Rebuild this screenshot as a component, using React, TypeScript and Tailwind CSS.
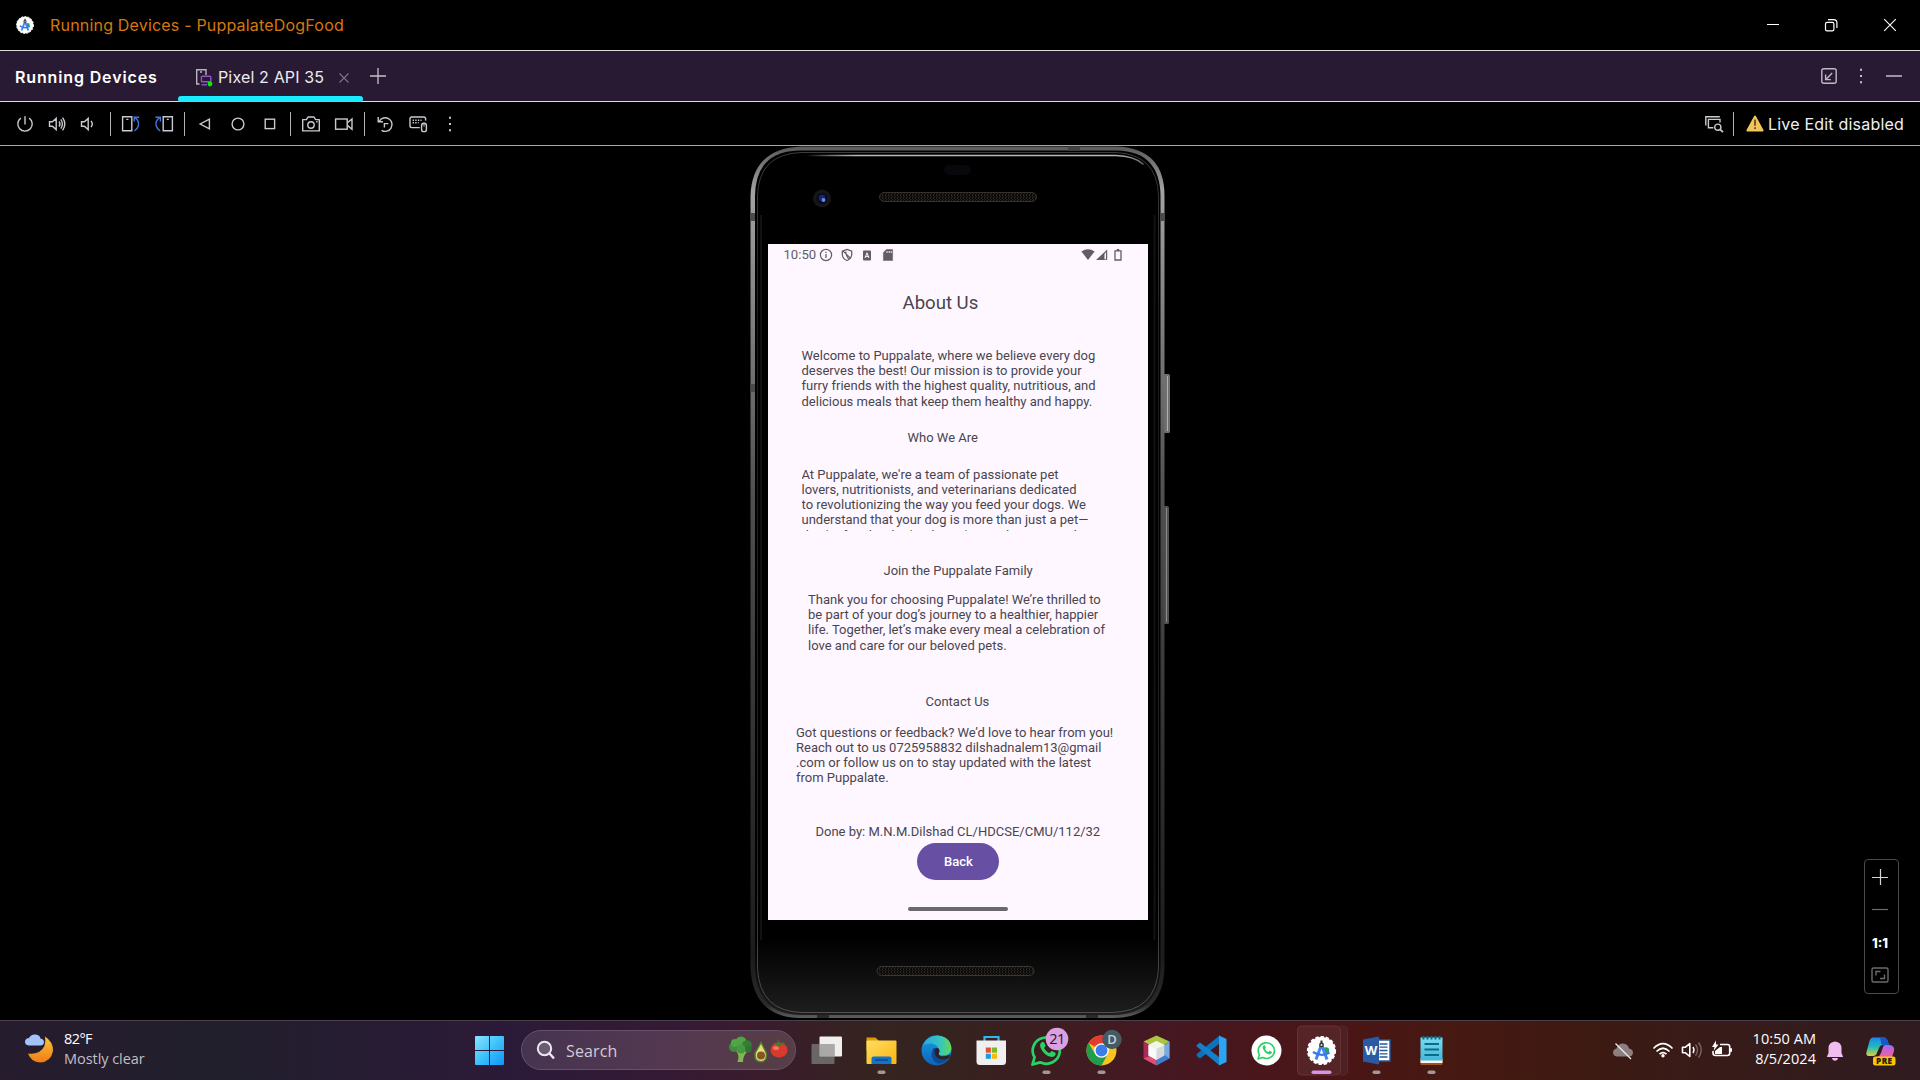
import React from "react";

type IconProps = { w?: number; h?: number; children: React.ReactNode; className?: string };

const Ico = ({ w = 24, h = 24, children, className = "" }: IconProps) => (
  <svg
    width={w}
    height={h}
    viewBox={`${-w / 2} ${-h / 2} ${w} ${h}`}
    fill="none"
    stroke="#c9cacf"
    strokeWidth="1.4"
    className={`shrink-0 ${className}`}
  >
    {children}
  </svg>
);

const Sep = ({ className = "" }: { className?: string }) => (
  <div className={`h-6 w-px shrink-0 bg-[#b4b4b4] ${className}`} />
);

const AndroidStudio = ({ r }: { r: number }) => (
  <g transform={`scale(${r / 15})`} stroke="none">
    <circle r="13.6" fill="#fff" />
    <circle r="13.8" fill="none" stroke="#fff" strokeWidth="1.6" strokeDasharray="3.4 1.9" />
    <circle cx="4.5" cy="0" r="3.2" fill="#1fa463" />
    <path d="M0-6 L-5.5 9 M0-6 L5.5 9" stroke="#4285f4" strokeWidth="3" fill="none" />
    <path d="M-8.5 1.5 Q0 7 8 2" stroke="#3b78e7" strokeWidth="2.4" fill="none" />
    <path d="M-1-10h2v3h-2z" fill="#333" />
    <circle cy="-5.6" r="2.4" fill="#333" />
    <circle cy="-5.6" r="1" fill="#dfe7f5" />
  </g>
);

function TitleBar() {
  return (
    <div className="flex h-[50px] shrink-0 items-center bg-black">
      <Ico w={18} h={18} className="ml-4">
        <AndroidStudio r={9.2} />
      </Ico>
      <span className="ml-4 whitespace-nowrap text-[16px] leading-5 tracking-[0.19px] text-[#d4780f]">
        Running Devices - PuppalateDogFood
      </span>
      <div className="ml-auto flex items-center">
        <Ico w={16} h={16} className="mr-[42px]">
          <path d="M-6-.5H6" stroke="#fff" strokeWidth="1" />
        </Ico>
        <Ico w={16} h={16} className="mr-[43px]">
          <rect x="-5.5" y="-2.6" width="8.4" height="8.4" rx="1.6" stroke="#fff" strokeWidth="1.2" />
          <path d="M-3-5.4H2.8Q5.9-5.4 5.9-2.2V3" stroke="#fff" strokeWidth="1.2" />
        </Ico>
        <Ico w={16} h={16} className="mr-[22px]">
          <path d="M-5.8-5.8L5.8 5.8M5.8-5.8L-5.8 5.8" stroke="#fff" strokeWidth="1.1" />
        </Ico>
      </div>
    </div>
  );
}

function TabBar() {
  return (
    <div className="flex h-[52px] shrink-0 items-stretch border-y border-[#dcdcdc] bg-[#291a33]">
      <div className="ml-[15px] flex w-[163px] items-center text-[16px] font-semibold tracking-[0.86px] text-white">
        <span className="whitespace-nowrap pt-0.5">Running Devices</span>
      </div>
      <div className="relative flex w-[185px] items-center">
        <Ico w={18} h={20} className="ml-[17px] mt-0.5">
          <path d="M-4.5 7H-7.3V-7.2H2V-2" stroke="#b9b4c0" />
          <path d="M-4-5H-2" stroke="#b9b4c0" />
          <rect x="-2.6" y="-.8" width="9.4" height="5.6" rx="1" stroke="#8f55c9" />
          <path d="M-2.5 7.8H3" stroke="#8f55c9" />
          <circle cx="6" cy="7" r="2.4" fill="#00f000" stroke="none" />
        </Ico>
        <span className="ml-[5px] whitespace-nowrap pt-0.5 text-[16px] tracking-[0.15px] text-[#ececf0]">Pixel 2 API 35</span>
        <Ico w={12} h={12} className="absolute left-[160px] top-[21px]">
          <path d="M-4.5-4.5L4.5 4.5M4.5-4.5L-4.5 4.5" stroke="#7d7585" strokeWidth="1.1" />
        </Ico>
        <div className="absolute -bottom-px left-0 h-1.5 w-full rounded-[3px] bg-[#1aebff]" />
      </div>
      <Ico w={18} h={18} className="ml-[6px] mt-[15.5px]">
        <path d="M-8 0H8M0-8V8" stroke="#c6c2cb" strokeWidth="1.3" />
      </Ico>
      <div className="ml-auto flex items-center">
        <Ico w={18} h={18} className="mr-[17px]">
          <rect x="-7.2" y="-7.2" width="14.4" height="14.4" rx="2" stroke="#bdb8c3" />
          <path d="M3.200-3L-2.600 2.900M-3.400-1.600V3.600H1.800" stroke="#bdb8c3" />
        </Ico>
        <Ico w={12} h={18} className="mr-[18px]">
          <path d="M-1-7.2h2v2h-2zM-1-1h2v2h-2zM-1 5.2h2v2h-2z" fill="#c6c2cb" stroke="none" />
        </Ico>
        <Ico w={18} h={18} className="mr-[17px]">
          <path d="M-8 0H8" stroke="#9b95a3" strokeWidth="2" />
        </Ico>
      </div>
    </div>
  );
}

function ToolBar() {
  return (
    <div className="flex h-11 shrink-0 items-center border-b border-[#a9a9a9] bg-black">
      <Ico className="ml-[13px]">
        <path d="M-4.2-5.9A7.2 7.2 0 1 0 4.2-5.9M0-7.8V.4" />
      </Ico>
      <Ico className="ml-2">
        <path d="M-7.5-2.3H-4.6L-.8-5.6V5.6L-4.6 2.3H-7.5ZM2-2.5Q4 0 2 2.5M3.8-4.6Q7 0 3.8 4.6M5.6-6.3Q10 0 5.6 6.3" />
      </Ico>
      <Ico className="ml-[7px]">
        <path d="M-6.5-2.3H-3.6L.2-5.6V5.6L-3.6 2.3H-6.5ZM3-3Q5.6 0 3 3" />
      </Ico>
      <Sep className="ml-[10px]" />
      <Ico className="ml-2">
        <path d="M-8.400-7.200H.800V6.800H-8.400ZM-4.600-4.600H-2.600" />
        <path d="M4-6.400Q8.500-3 7.400 1.500Q6.600 5 3.400 6.900M3.200-2.400V-6.800H8.200" stroke="#3f76e0" />
      </Ico>
      <Ico className="ml-[9px]">
        <path d="M-.800-7.200H8.400V6.800H-.800ZM2.800-4.600H4.800" />
        <path d="M-4.400-6.400Q-9-3-7.900 1.500Q-7 5-3.800 6.900M-3.600-2.400V-6.800H-8.600" stroke="#3f76e0" />
      </Ico>
      <Sep className="ml-2" />
      <Ico className="ml-2">
        <path d="M4.400-4.800V4.800L-4.800 0Z" />
      </Ico>
      <Ico className="ml-[9px]">
        <circle r="5.900" />
      </Ico>
      <Ico className="ml-2">
        <rect x="-4.800" y="-4.800" width="9.400" height="9.400" />
      </Ico>
      <Sep className="ml-2" />
      <Ico className="ml-2">
        <path d="M-8.300-4.400H-4.600L-3-7H3L4.600-4.400H8.300V6.900H-8.300Z" strokeLinejoin="round" />
        <circle cy="1" r="3.200" />
        <path d="M5.200-2.200h1.400" />
      </Ico>
      <Ico className="ml-[9px]">
        <rect x="-8.400" y="-5" width="11.600" height="10.200" />
        <path d="M3.400-1.200L8-5V5.200L3.400 1.400" />
      </Ico>
      <Sep className="ml-2" />
      <Ico className="ml-2">
        <path d="M-5.800-2.600A6.800 6.800 0 1 1-3.400 6.300M-6.800-7V-2.200H-2M-.600 3.600V-.400H3.400" />
      </Ico>
      <Ico className="ml-[9px]">
        <path d="M1.800 3.600H-6.200Q-8 3.600-8 1.800V-5.200Q-8-7-6.200-7H5.600Q7.600-7 7.600-5.200V-3.600" />
        <path d="M-5.400-3.800h9M-5.400-1.200h6" strokeDasharray="1.400 1.200" />
        <rect x="3.600" y="-.800" width="4.800" height="8.400" rx="2.200" />
        <path d="M6-.5V2.600" strokeWidth="1" />
      </Ico>
      <Ico className="ml-2">
        <path d="M-1-7.200h2v2h-2zM-1-1h2v2h-2zM-1 5.200h2v2h-2z" fill="#c9cacf" stroke="none" />
      </Ico>
      <div className="ml-auto flex items-center">
        <Ico className="mr-[7px]">
          <path d="M-8.200 1.600V-7.200H5.800" />
          <path d="M-.6 3.800H-5.600V-4.600H6V-1.600" />
          <circle cx="3.800" cy="3.200" r="3.100" />
          <path d="M6.100 5.400L9 8.200" strokeWidth="1.800" />
        </Ico>
        <Sep className="mr-3" />
        <Ico w={18} h={18} className="mr-1">
          <path d="M0-7.400L7.600 6.400H-7.600Z" fill="#f2c55c" stroke="#f2c55c" strokeWidth="2" strokeLinejoin="round" />
          <path d="M-.9-4.600H.9V1.800H-.9ZM-.9 3.200H.9V5H-.9Z" fill="#5e4d33" stroke="none" />
        </Ico>
        <span className="mr-4 whitespace-nowrap text-[16px] tracking-[0.200px] text-[#eef0f4]">Live Edit disabled</span>
      </div>
    </div>
  );
}

/* Phone body, speakers, camera and side keys, in window coordinates. */
function DeviceFrame() {
  return (
    <svg className="absolute inset-0" width="430" height="874" viewBox="746 146 430 874" fill="none">
      <defs>
        <linearGradient id="edge" x1="0" y1="0" x2="0" y2="1">
          <stop offset="0" stopColor="#5a5a5a" />
          <stop offset=".05" stopColor="#a2a2a2" />
          <stop offset=".15" stopColor="#8a8a8a" />
          <stop offset=".4" stopColor="#505050" />
          <stop offset=".7" stopColor="#303030" />
          <stop offset=".93" stopColor="#1c1c1c" />
          <stop offset=".985" stopColor="#2a2a2a" />
          <stop offset="1" stopColor="#5e5e5e" />
        </linearGradient>
        <linearGradient id="edgeR" x1="0" y1="0" x2="0" y2="1">
          <stop offset="0" stopColor="#a5a5a5" />
          <stop offset=".25" stopColor="#858585" />
          <stop offset=".5" stopColor="#626262" />
          <stop offset=".8" stopColor="#2e2e2e" />
          <stop offset="1" stopColor="#1e1e1e" />
        </linearGradient>
        <linearGradient id="body" x1="0" y1="0" x2="0" y2="1">
          <stop offset="0" stopColor="#000" />
          <stop offset=".91" stopColor="#000" />
          <stop offset="1" stopColor="#1e1e1e" />
        </linearGradient>
        <linearGradient id="rim" x1="0" y1="0" x2="0" y2="1">
          <stop offset="0" stopColor="#3c3c3c" />
          <stop offset=".2" stopColor="#1c1c1c" />
          <stop offset=".8" stopColor="#222" />
          <stop offset="1" stopColor="#505050" />
        </linearGradient>
        <linearGradient id="gloss" x1="0" y1="0" x2="1" y2="0">
          <stop offset="0" stopColor="#fff" stopOpacity="0" />
          <stop offset=".15" stopColor="#b5bcc0" />
          <stop offset=".9" stopColor="#b5bcc0" />
          <stop offset="1" stopColor="#fff" stopOpacity=".4" />
        </linearGradient>
        <pattern id="mesh" width="3" height="3" patternUnits="userSpaceOnUse">
          <rect width="3" height="3" fill="#0c0b0a" />
          <path d="M0 0L1.5 1.5L0 3" stroke="#38342e" strokeWidth=".7" />
        </pattern>
      </defs>
      <rect x="1163" y="374" width="7" height="59" rx="1.5" fill="#6f6f6f" />
      <rect x="1167" y="376" width="1" height="55" fill="#b0b0b0" />
      <rect x="1163" y="506" width="6" height="118" rx="1.5" fill="#505050" />
      <rect x="1166" y="508" width="1" height="114" fill="#8a8a8a" />
      <path
        d="M802 146.500H1116Q1164.500 148 1164.500 196V968Q1163 1017 1114 1018H800Q753 1017 750.500 968V196Q752 148 802 146.500Z"
        fill="url(#edge)"
      />
      <path d="M1162.500 190V940" stroke="url(#edgeR)" strokeWidth="3.500" />
      <path
        d="M799 150.500H1117Q1160 151.500 1160.500 196V968Q1158.500 1014 1114 1015H800Q757 1014 755 968V196Q755.500 151.500 799 150.500Z"
        fill="url(#body)"
      />
      <path
        d="M801 152.500H1115Q1157.500 154 1158.500 196V968Q1156.500 1011.500 1112 1012.500H802Q759.500 1011.500 757.500 968V196Q758.500 154 801 152.500Z"
        stroke="url(#rim)"
        strokeWidth="1"
      />
      <path d="M761 215V940M1154.500 215V940" stroke="#121212" strokeWidth="2" />
      <path d="M750.500 213H755V221H750.500ZM1160.500 213H1164.500V221H1160.500ZM750.500 384H755V392H750.500Z" fill="#4a4a4a" />
      <path d="M1068 146.500H1080V150.500H1068Z" fill="#444" />
      <path d="M817 1015H829V1018H817ZM1086 1015H1098V1018H1086Z" fill="#2a2a2a" />
      <path d="M806 155.500H1116Q1134 156 1143 164" stroke="url(#gloss)" strokeWidth="1.600" strokeLinecap="round" />
      <rect x="944" y="165" width="27" height="10" rx="5" fill="#07070c" />
      <circle cx="822" cy="198.500" r="9" fill="#15151a" />
      <circle cx="822" cy="198.500" r="5.500" fill="#080a1e" />
      <circle cx="822" cy="198" r="3.200" fill="#1b2765" />
      <circle cx="823.500" cy="200" r="1.900" fill="#6f86f0" />
      <rect x="879.500" y="192.500" width="157" height="9" rx="4.500" fill="url(#mesh)" stroke="#35322e" />
      <rect x="877" y="966.500" width="157" height="9" rx="4.500" fill="url(#mesh)" stroke="#3a3835" />
    </svg>
  );
}

function StatusBar() {
  return (
    <div className="flex h-[22px] shrink-0 items-center text-[13.100px] text-[#615d66]">
      <span className="ml-[15.500px] w-[34.500px] whitespace-nowrap">10:50</span>
      <Ico w={14} h={14} className="ml-px">
        <circle r="5.600" stroke="#615d66" strokeWidth="1.200" />
        <path d="M0-1V3M0-3.200V-2" stroke="#615d66" strokeWidth="1.300" />
      </Ico>
      <Ico w={14} h={14} className="ml-[6.500px]">
        <path d="M0-5.600L4.700-3.800V0Q4 4 0 5.500Q-4 4-4.700 0V-3.800Z" stroke="#615d66" strokeWidth="1.300" />
        <path d="M-4-4L3.800 3.500M-1-3.500Q-1.500 0 2 4.500" stroke="#615d66" strokeWidth="1.100" />
      </Ico>
      <Ico w={14} h={14} className="ml-[6.500px]">
        <rect x="-4" y="-4.600" width="8" height="10" rx=".8" fill="#615d66" stroke="none" />
        <path d="M-2 3L0-2.200L2 3M-1.200 1.400H1.200" stroke="#fef7ff" strokeWidth="1" />
      </Ico>
      <Ico w={14} h={14} className="ml-[6.500px]">
        <path d="M-1.600-5.500H4.600V5.500H-4.600V-2.500Z" fill="#615d66" stroke="#615d66" strokeWidth=".5" strokeLinejoin="round" />
        <path d="M-1-4V-2M1.200-4V-2M3.200-4V-2" stroke="#fef7ff" strokeWidth=".9" />
      </Ico>
      <Ico w={14} h={14} className="ml-auto">
        <path d="M-6.600-3.600Q0-7.800 6.600-3.600L0 5Z" fill="#615d66" stroke="none" />
      </Ico>
      <Ico w={12} h={14} className="ml-px">
        <path d="M5.200-5.500V5H-6Z" fill="#615d66" stroke="none" />
        <path d="M4-3V4.200H2.500V-1Z" fill="#fef7ff" stroke="none" />
      </Ico>
      <Ico w={12} h={14} className="ml-1 mr-6">
        <path d="M-3-4.200H3V5H-3ZM-1.200-5.400H1.200" stroke="#615d66" strokeWidth="1.300" />
      </Ico>
    </div>
  );
}

function AppScreen() {
  return (
    <div
      className="relative ml-[22px] mt-[98px] flex h-[676px] w-[380px] flex-col overflow-hidden bg-[#fef7ff] text-[13px] leading-[15.200px] text-[#49454f]"
      style={{ fontFamily: "Roboto, sans-serif" }}
    >
      <StatusBar />
      <h1 className="ml-[134.500px] mt-[24px] h-[26px] whitespace-nowrap text-[18.600px] leading-[27px]">About Us</h1>
      <p className="ml-[33.500px] mt-[32px] h-[62px] whitespace-nowrap">
        Welcome to Puppalate, where we believe every dog
        <br />
        deserves the best! Our mission is to provide your
        <br />
        furry friends with the highest quality, nutritious, and
        <br />
        delicious meals that keep them healthy and happy.
      </p>
      <h2 className="ml-[139.500px] mt-5 h-4 whitespace-nowrap">Who We Are</h2>
      <p className="ml-[33.500px] mt-[20.700px] h-[64.300px] overflow-hidden whitespace-nowrap">
        At Puppalate, we're a team of passionate pet
        <br />
        lovers, nutritionists, and veterinarians dedicated
        <br />
        to revolutionizing the way you feed your dogs. We
        <br />
        understand that your dog is more than just a pet—
        <br />
        they're family. That's why we've made it our goal to
      </p>
      <h2 className="ml-[115.500px] mt-8 h-4 whitespace-nowrap">Join the Puppalate Family</h2>
      <p className="ml-10 mt-[13px] h-[62px] whitespace-nowrap">
        Thank you for choosing Puppalate! We’re thrilled to
        <br />
        be part of your dog’s journey to a healthier, happier
        <br />
        life. Together, let’s make every meal a celebration of
        <br />
        love and care for our beloved pets.
      </p>
      <h2 className="ml-[157.500px] mt-10 h-4 whitespace-nowrap">Contact Us</h2>
      <p className="ml-7 mt-[14.600px] h-[62.400px] whitespace-nowrap">
        Got questions or feedback? We’d love to hear from you!
        <br />
        Reach out to us 0725958832 dilshadnalem13@gmail
        <br />
        .com or follow us on to stay updated with the latest
        <br />
        from Puppalate.
      </p>
      <p className="ml-[47.500px] mt-[37px] h-4 whitespace-nowrap">Done by: M.N.M.Dilshad CL/HDCSE/CMU/112/32</p>
      <button className="mx-auto mt-[3px] flex h-[37px] w-[82px] shrink-0 items-center justify-center rounded-full bg-[#6750a4] pl-px pt-px font-medium text-white">
        Back
      </button>
      <div className="mx-auto mb-[9px] mt-auto h-1 w-[100px] rounded-full bg-[#6b6770]" />
    </div>
  );
}

function ZoomPanel() {
  return (
    <div className="absolute right-[21px] top-[713px] flex h-[135px] w-[35px] flex-col items-center rounded-[4px] border border-[#4a4a4a] pr-[3px]">
      <Ico w={18} h={18} className="mt-2">
        <path d="M-8 .5H8M.5-8V8" stroke="#d5d6da" strokeWidth="1.200" />
      </Ico>
      <Ico w={18} h={18} className="mt-[14px]">
        <path d="M-8 .5H8" stroke="#6b6b6b" strokeWidth="1.200" />
      </Ico>
      <span className="mt-[15px] text-[13px] font-extrabold leading-5 text-white">1:1</span>
      <Ico w={18} h={18} className="mt-[13px]">
        <rect x="-8" y="-7" width="16" height="14" rx="1.500" stroke="#6b6b6b" />
        <path d="M-4 .5V-3.500H.5M4.500-.5V3.500H0" stroke="#6b6b6b" />
      </Ico>
    </div>
  );
}

const WaGlyph = ({ s, c }: { s: number; c: string }) => (
  <g transform={`scale(${s})`}>
    <path d="M-14.500 14.500L-12.300 7A14 13.500 0 1 1-6.500 12.200Z" fill="none" stroke={c} strokeWidth="2.800" strokeLinejoin="round" />
    <path
      d="M-5.500-7Q-3.500-8.500-2.500-6L-1.500-3.500Q-1.500-2.500-3-1.200Q-1 3 3 4.200Q4.500 1.800 5.500 2.200L9 4Q9 8 4.500 8.200Q-3 7-6.500-1Q-8-5-5.500-7Z"
      fill={c}
      transform="translate(.5,-1.500)"
    />
  </g>
);

const apps: { name: string; run?: boolean; active?: boolean; art: React.ReactNode }[] = [
  {
    name: "task-view",
    art: (
      <>
        <rect x="-7" y="-14" width="22.500" height="20" rx="1" fill="#f1efee" />
        <rect x="-15" y="-6.500" width="23" height="20" rx="1" fill="#777" opacity=".8" />
        <rect x="-7" y="-6.500" width="15" height="12.500" fill="#aaa9a8" />
      </>
    ),
  },
  {
    name: "explorer",
    run: true,
    art: (
      <>
        <path d="M-15-13H-6L-3-10V0H-15Z" fill="#e09a05" />
        <rect x="-15" y="-10" width="30" height="23.500" rx="1" fill="url(#folder)" />
        <path d="M-10 13.500V8Q-10 6-8 6H8Q10 6 10 8V13.500Z" fill="#1272cc" />
        <path d="M-6.500 9.500H6.500" stroke="#0a3e80" strokeWidth="1.200" />
      </>
    ),
  },
  {
    name: "edge",
    art: (
      <>
        <circle r="15" fill="url(#edgeBlue)" />
        <path d="M-14 -5Q-9-15 1-15Q14-14 15-2Q14 6 4 5Q1 4 3 1Q2-6-5-7Q-11-7-14-5Z" fill="url(#edgeGreen)" />
        <path d="M-3-2.500Q-8 6-1 12Q6 15 12 8Q9 9.500 4 7.500Q-3 5-1.500-2Z" fill="#0d4a94" />
        <path d="M-1.500-2Q3-4 3 1Q1 4 4 5.500Q9 6.500 14 4Q13 7 12 8Q2 11-1.500 4Q-2.500 0-1.500-2Z" fill="#2b2124" />
      </>
    ),
  },
  {
    name: "store",
    art: (
      <>
        <path d="M-7-9V-13.500H7V-9" fill="none" stroke="#35b5f0" strokeWidth="2.200" />
        <path d="M-15-10H14.500V11Q14.500 14.500 11 14.500H-11.500Q-15 14.500-15 11Z" fill="#f1f0f0" />
        <path d="M-5.700-3H-.6V2.200H-5.700Z" fill="#e8502a" />
        <path d="M.4-3H5.500V2.200H.4Z" fill="#7db827" />
        <path d="M-5.700 3.200H-.6V8.300H-5.700Z" fill="#14a0e8" />
        <path d="M.4 3.200H5.500V8.300H.4Z" fill="#f9b80b" />
      </>
    ),
  },
  {
    name: "whatsapp",
    run: true,
    art: (
      <>
        <WaGlyph s={0.97} c="#25d366" />
        <circle cx="10.500" cy="-11.500" r="11.300" fill="#d9a1e4" />
        <text x="10.500" y="-6.200" textAnchor="middle" fontSize="14.500" letterSpacing="-.6" fill="#25122c" fontFamily="Open Sans, sans-serif">
          21
        </text>
      </>
    ),
  },
  {
    name: "chrome",
    run: true,
    art: (
      <>
        <circle r="15" fill="#fcc31e" />
        <path d="M0 0L-13-7.500A15 15 0 0 1 13-7.500L0-7Z" fill="#e33b2e" />
        <path d="M-13-7.500A15 15 0 0 0 0 15L6 4L-6 4Z" fill="#1f9d4d" />
        <circle r="7.300" fill="#fff" />
        <circle r="5.900" fill="#3b7ded" />
        <circle cx="10.500" cy="-11" r="9.700" fill="#465a64" />
        <text x="10.500" y="-6.200" textAnchor="middle" fontSize="13" fontWeight="600" fill="#c5d4da" fontFamily="Open Sans, sans-serif">
          D
        </text>
      </>
    ),
  },
  {
    name: "netbeans",
    art: (
      <>
        <path d="M0-15L13-9L0 0L-13-9Z" fill="#abc540" />
        <path d="M-13-9L0-2V15L-13 8Z" fill="#a92a55" />
        <path d="M-13 8L0 3V15Z" fill="#e0506f" />
        <path d="M13-9V8L0 15V0Z" fill="#3f7fd0" />
        <path d="M13 -9V8L8 4V-5Z" fill="#8fbde8" opacity=".7" />
        <path d="M0-9.500L8-5.500V5L0 9.500L-8 5V-5.500Z" fill="#d3d9dd" />
        <path d="M0-9.500L8-5.500L0-1.500L-8-5.500Z" fill="#f2f4e6" />
        <path d="M-8-5.500L0-1.500V9.500L-8 5Z" fill="#fafafa" />
      </>
    ),
  },
  {
    name: "vscode",
    art: (
      <>
        <path d="M7.500-14.500V-6.500L-11.500 8L-14.800 5.500V3.500Z" fill="#0c72bd" />
        <path d="M-14.800-4V-5.500L-11.500-8L7.500 6.500V14.500Z" fill="#1380cc" />
        <path d="M7.500-15L15-11.500V11.500L7.500 15Z" fill="#2ba4f2" />
      </>
    ),
  },
  {
    name: "whatsapp-web",
    art: (
      <>
        <circle r="15" fill="#fff" />
        <WaGlyph s={0.58} c="#2dd267" />
      </>
    ),
  },
  {
    name: "android-studio",
    active: true,
    art: <AndroidStudio r={15} />,
  },
  {
    name: "word",
    run: true,
    art: (
      <>
        <rect x="0" y="-10.500" width="13.500" height="21" fill="#fff" stroke="#2a5699" strokeWidth="1.500" />
        <path d="M3-6.500H11M3-3.300H11M3 0H11M3 3.300H11M3 6.500H11" stroke="#2a5699" strokeWidth="1.300" />
        <path d="M-13.500-11L2.500-14V14L-13.500 11Z" fill="#2b5aa5" />
        <text x="-5.500" y="4.800" textAnchor="middle" fontSize="13" fontWeight="700" fill="#fff" fontFamily="Open Sans, sans-serif">
          W
        </text>
      </>
    ),
  },
  {
    name: "notepad",
    run: true,
    art: (
      <>
        <rect x="-11" y="9" width="22" height="5.500" rx="1" fill="#a8501a" />
        <rect x="-11" y="8" width="22" height="4.500" fill="#f3f3f3" />
        <rect x="-11" y="-13" width="22" height="23" fill="url(#note)" />
        <path d="M-8-14.500V-11M-4-14.500V-11M0-14.500V-11M4-14.500V-11M8-14.500V-11" stroke="#0e6a8a" strokeWidth="2" />
        <path d="M-7-6.500H7.500M-7-1H7.500M-7 4.500H7.500" stroke="#0e6a8a" strokeWidth="1.800" />
      </>
    ),
  },
];

function TaskBar() {
  return (
    <div
      className="flex h-[60px] shrink-0 items-stretch border-t border-[#4b414c] bg-[linear-gradient(90deg,#261c2e_0px,#211f2c_220px,#291b36_430px,#2c1a38_540px,#361a34_680px,#3a1c2c_760px,#35241f_880px,#36221f_960px,#451822_1150px,#4a1517_1330px,#461912_1450px,#3d1a12_1590px,#371b19_1720px,#2f1b20_1920px)]"
      style={{ fontFamily: "'Open Sans', 'Noto Sans', sans-serif" }}
    >
      <svg width="0" height="0" className="absolute">
        <defs>
          <linearGradient id="folder" x1="0" y1="0" x2="1" y2="1">
            <stop offset="0" stopColor="#ffdd62" />
            <stop offset="1" stopColor="#fbb613" />
          </linearGradient>
          <linearGradient id="edgeBlue" x1="0" y1="0" x2="0" y2="1">
            <stop offset="0" stopColor="#1b9de0" />
            <stop offset="1" stopColor="#0d62bb" />
          </linearGradient>
          <linearGradient id="edgeGreen" x1="0" y1="0" x2="1" y2="0">
            <stop offset="0" stopColor="#26a8e4" />
            <stop offset=".6" stopColor="#35c5c0" />
            <stop offset="1" stopColor="#62d957" />
          </linearGradient>
          <linearGradient id="note" x1="0" y1="0" x2="0" y2="1">
            <stop offset="0" stopColor="#7adcf2" />
            <stop offset="1" stopColor="#42b7da" />
          </linearGradient>
          <linearGradient id="moon" x1="0" y1="0" x2="0" y2="1">
            <stop offset="0" stopColor="#f8c63a" />
            <stop offset="1" stopColor="#f07b16" />
          </linearGradient>
          <linearGradient id="win" x1="0" y1="0" x2="1" y2="1">
            <stop offset="0" stopColor="#8ae3fd" />
            <stop offset=".5" stopColor="#3ec2fb" />
            <stop offset="1" stopColor="#0f95f8" />
          </linearGradient>
          <linearGradient id="copA" x1="0" y1="0" x2="0" y2="1">
            <stop offset="0" stopColor="#1d86e8" />
            <stop offset=".5" stopColor="#22b9c0" />
            <stop offset="1" stopColor="#d9d338" />
          </linearGradient>
          <linearGradient id="copB" x1="0" y1="0" x2="0" y2="1">
            <stop offset="0" stopColor="#a667f0" />
            <stop offset="1" stopColor="#f0609c" />
          </linearGradient>
        </defs>
      </svg>
      <div className="flex w-[474px] items-center">
        <Ico w={30} h={30} className="-mt-1 ml-6">
          <g stroke="none">
            <path d="M6-12.500Q14.500-7 14 2Q12 13 1 13.500Q-8 13-11 4.500Q-5 5.500 0 3Q8-2 6-12.500Z" fill="url(#moon)" />
            <path d="M-10-3.500Q-14.500-4-14-8Q-13-11-10-11Q-8-15-3.500-14.500Q1-14 1.500-10.500Q5-10 5-6.500Q4.500-3.500 1.500-3.500Z" fill="#a4c3fa" />
          </g>
        </Ico>
        <div className="-mt-[3px] ml-[10px] flex flex-col whitespace-nowrap text-[14.500px] leading-5">
          <span className="tracking-[-0.600px] text-white">82°F</span>
          <span className="tracking-[-0.050px] text-[#c2bfc5]">Mostly clear</span>
        </div>
      </div>
      <svg width="31" height="59" viewBox="0 0 31 59" className="shrink-0">
        <path
          d="M2 15H15V29H1V16Q1 15 2 15ZM16 15H29Q30 15 30 16V29H16ZM1 30H15V44H2Q1 44 1 43ZM16 30H30V43Q30 44 29 44H16Z"
          fill="url(#win)"
        />
      </svg>
      <div className="ml-4 mt-[9px] flex h-10 w-[275px] items-center rounded-full border border-[#67506a] bg-[#51384f] bg-[linear-gradient(90deg,#463450,#543850_55%,#573d45)]">
        <Ico w={22} h={22} className="ml-[13px]">
          <circle cx="-1.500" cy="-1.500" r="6.700" stroke="#eceaee" strokeWidth="2" fill="#6a5a73" />
          <path d="M3.500 3.500L8 8.500" stroke="#eceaee" strokeWidth="2.400" />
        </Ico>
        <span className="ml-[9px] pt-0.5 text-[16px] tracking-[0.150px] text-[#d3ccd4]">Search</span>
        <svg width="60" height="28" viewBox="0 0 60 28" className="ml-auto mr-[7px]">
          <path d="M8 15Q12 19 9.500 26H15Q15 19 20 15Z" fill="#7fb850" />
          <circle cx="6" cy="11" r="5" fill="#3f8f3c" />
          <circle cx="7" cy="7" r="4" fill="#52a548" />
          <circle cx="13" cy="6" r="5.500" fill="#4fa546" />
          <circle cx="19" cy="9" r="4.800" fill="#357f35" />
          <circle cx="20" cy="13" r="3.600" fill="#2f7431" />
          <circle cx="13" cy="13" r="4.500" fill="#469741" />
          <path d="M33 5Q35 9 39 17Q40 26 33 26.500Q25 26 26.500 17Q31 9 33 5Z" fill="#54822a" />
          <path d="M33 8Q35 12 37.500 17Q38.500 25 33 25Q27 25 28 17Q31 12 33 8Z" fill="#dfe07a" />
          <circle cx="33" cy="19.500" r="4" fill="#8b5227" />
          <ellipse cx="51" cy="14" rx="8.500" ry="7.500" fill="#d93a2b" />
          <ellipse cx="48" cy="12" rx="3" ry="2" fill="#ee7a62" />
          <path d="M45 7L50 7.500L49 3L52 7L57 6L53 9.500L50 10.500L48 9Z" fill="#3f7d2b" />
        </svg>
      </div>
      <div className="ml-[2.500px] flex">
        {apps.map((a) => (
          <svg key={a.name} width="55" height="59" viewBox="-27.5 -29.5 55 59" className="shrink-0 overflow-visible">
            {a.active && (
              <>
                <path d="M19-24.500H22Q26-24.500 26-20V20Q26 24.500 22 24.500H19" fill="#4d2022" stroke="#572a2c" />
                <rect x="-24" y="-24.500" width="43" height="49" rx="4" fill="#552427" stroke="#653236" />
              </>
            )}
            {a.art}
            {a.run && <rect x="-4" y="20" width="8" height="3.600" rx="1.800" fill="#a3969a" />}
            {a.active && <rect x="-10" y="20" width="20" height="3.600" rx="1.800" fill="#d793e4" />}
          </svg>
        ))}
      </div>
      <div className="ml-auto flex items-center">
        <Ico w={22} h={22} className="mr-[18px]">
          <path d="M-6 5.500Q-10 5-10 1Q-9.500-2-6.500-2.500Q-5-7.500 0-7.500Q5-7 6-2.500Q10-2 10 2Q9.500 5.500 6 5.500Z" fill="#8d7f7f" stroke="none" />
          <path d="M-7.500-7.500L8 8" stroke="#f0eeee" strokeWidth="1.300" />
        </Ico>
        <Ico w={22} h={20} className="-mt-0.5 mr-[7px]">
          <path d="M-9.500-1.500Q0-11 9.500-1.500M-6.500 1.500Q0-5 6.500 1.500M-3.500 4.200Q0 1 3.500 4.200" stroke="#fff" strokeWidth="1.700" />
          <circle cy="5.800" r="1.700" fill="#fff" stroke="none" />
        </Ico>
        <Ico w={22} h={20} className="-mt-px mr-2">
          <path d="M-9.500-2.800H-6.500L-2.200-6.500V6.500L-6.500 2.800H-9.500Z" stroke="#fff" strokeWidth="1.600" strokeLinejoin="round" />
          <path d="M1-3Q3 0 1 3" stroke="#fff" />
          <path d="M3.500-5.500Q7.500 0 3.500 5.500M6.500-7.500Q12 0 6.500 7.500" stroke="#7a6464" />
        </Ico>
        <Ico w={22} h={22} className="-mt-px mr-5">
          <path d="M-2-5.500H5.500Q7.700-5.500 7.700-3.300V3.300Q7.700 5.500 5.500 5.500H-6.500Q-9 5.500-9 3V1" stroke="#fff" strokeWidth="1.600" />
          <path d="M9-1.800V1.800" stroke="#fff" strokeWidth="2" />
          <path d="M-6-9.500L-10-3H-7.500L-8.500 1L-3.500-5.500H-6Z" fill="#fff" stroke="none" />
          <path d="M-7 4V1L-2-3H0V4Z" fill="#fff" stroke="none" />
        </Ico>
        <div className="-mt-[3px] flex flex-col items-end whitespace-nowrap text-[14.500px] leading-5 tracking-[0.060px] text-white">
          <span>10:50 AM</span>
          <span>8/5/2024</span>
        </div>
        <Ico w={18} h={22} className="ml-2.5">
          <g fill="#f0bdf0" stroke="none">
            <path d="M0-9.500Q6.500-9 6.500-2.500V2L8.200 6H-8.200L-6.500 2V-2.500Q-6.500-9 0-9.500Z" />
            <path d="M-3 7H3Q2.500 9.800 0 9.800Q-2.500 9.800-3 7Z" />
          </g>
        </Ico>
        <svg width="32" height="32" viewBox="-16 -16 32 32" className="ml-[21px] mr-[23px] shrink-0">
          <path d="M-8-13.500H3Q6-13 7-9L8-6H2Q-1-6-2 -3L-4.500 3Q-5.500 5-8 5H-12Q-15.500 5-14.500 1L-11.500-10Q-10.500-13.500-8-13.500Z" fill="url(#copA)" />
          <path d="M-1-13.500H4Q6-13 7-9L8-6H3Q0-6 0-9Z" fill="#1757c8" />
          <path d="M4-6H9Q14-5 13 0L11 6H-4Q-1 5 0 2L2-4Q2.500-6 4-6Z" fill="url(#copB)" />
          <rect x="-8" y="5.500" width="22.500" height="9" rx="2.200" fill="#f9c409" />
          <text x="3.300" y="13" textAnchor="middle" fontSize="8.200" fontWeight="800" letterSpacing=".4" fill="#241c08">
            PRE
          </text>
        </svg>
      </div>
    </div>
  );
}

export default function App() {
  return (
    <div className="flex h-[1080px] w-[1920px] flex-col overflow-hidden bg-black" style={{ fontFamily: "Inter, sans-serif" }}>
      <TitleBar />
      <TabBar />
      <ToolBar />
      <main className="relative h-[874px] shrink-0 overflow-hidden bg-black">
        <div className="relative ml-[746px] flex h-[874px] w-[430px]">
          <DeviceFrame />
          <AppScreen />
        </div>
        <ZoomPanel />
      </main>
      <TaskBar />
    </div>
  );
}
